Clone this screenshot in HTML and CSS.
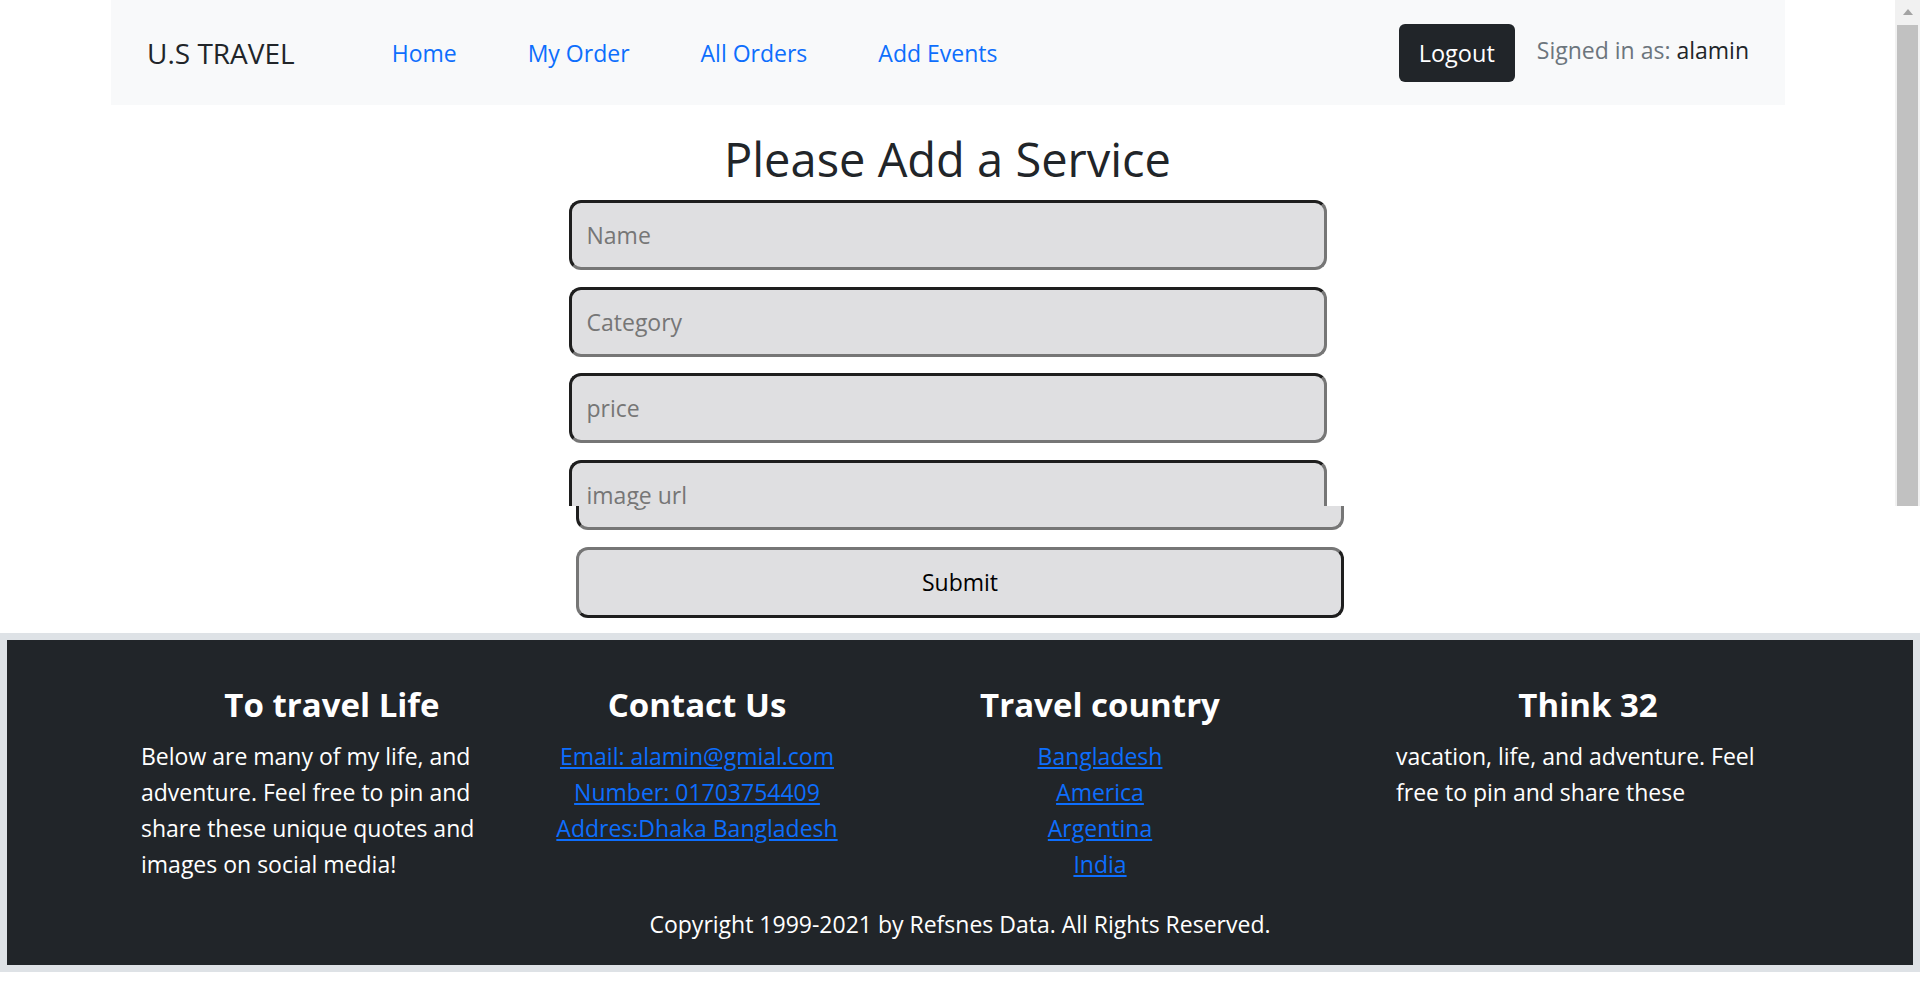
FILE: index.html
```html
<!DOCTYPE html>
<html lang="en">
<head>
<meta charset="utf-8">
<title>U.S Travel - Add Service</title>
<link rel="stylesheet" href="styles.css">
</head>
<body>
<div class="scrollbar" aria-hidden="true">
  <div class="sb-arrow"></div>
  <div class="sb-thumb"></div>
</div>

<div class="upper">
  <nav class="navbar">
    <a class="brand" href="#">U.S TRAVEL</a>
    <ul class="nav-links">
      <li><a href="#">Home</a></li>
      <li><a href="#">My Order</a></li>
      <li><a href="#">All Orders</a></li>
      <li><a href="#">Add Events</a></li>
    </ul>
    <div class="nav-right">
      <button class="logout" type="button">Logout</button>
      <span class="signed">Signed in as: <span class="user">alamin</span></span>
    </div>
  </nav>

  <h1 class="title">Please Add a Service</h1>

  <div class="form-top">
    <input class="field" type="text" placeholder="Name">
    <input class="field" type="text" placeholder="Category">
    <input class="field" type="text" placeholder="price">
    <div class="slice slice-top"><input class="field" type="text" placeholder="image url"></div>
  </div>
</div>

<div class="lower">
  <div class="slice slice-bottom" aria-hidden="true"><input class="field" type="text" placeholder="image url" tabindex="-1"></div>
  <button class="submit" type="submit">Submit</button>

  <footer class="footer">
    <div class="footer-inner">
      <div class="cols">
        <div class="col col1">
          <h3>To travel Life</h3>
          <p>Below are many of my life, and<br>adventure. Feel free to pin and<br>share these unique quotes and<br>images on social media!</p>
        </div>
        <div class="col col2">
          <h3>Contact Us</h3>
          <a href="#">Email: alamin@gmial.com</a>
          <a href="#">Number: 01703754409</a>
          <a href="#">Addres:Dhaka Bangladesh</a>
        </div>
        <div class="col col3">
          <h3>Travel country</h3>
          <a href="#">Bangladesh</a>
          <a href="#">America</a>
          <a href="#">Argentina</a>
          <a href="#">India</a>
        </div>
        <div class="col col4">
          <h3>Think 32</h3>
          <p>vacation, life, and adventure. Feel<br>free to pin and share these</p>
        </div>
      </div>
      <p class="copyright">Copyright 1999-2021 by Refsnes Data. All Rights Reserved.</p>
    </div>
  </footer>
</div>
</body>
</html>
```

FILE: styles.css
```css
* { box-sizing: border-box; }

html, body {
  margin: 0;
  padding: 0;
  background: #fff;
}

body {
  position: relative;
  font-family: "Open Sans", "Noto Sans", sans-serif;
  font-size: 23px;
  line-height: 1.5;
  color: #212529;
  min-height: 985px;
}

/* fake browser scrollbar (top viewport part) */
.scrollbar {
  position: absolute;
  top: 0;
  right: 0;
  width: 25px;
  height: 506px;
  background: #f1f1f1;
}
.sb-arrow {
  position: absolute;
  top: 9px;
  left: 8px;
  width: 0;
  height: 0;
  border-left: 5px solid transparent;
  border-right: 5px solid transparent;
  border-bottom: 6px solid #a3a3a3;
}
.sb-thumb {
  position: absolute;
  top: 25px;
  left: 2px;
  right: 2px;
  bottom: 0;
  background: #c1c1c1;
}

/* upper part: laid out next to the scrollbar */
.upper {
  width: 1895px;
}

.navbar {
  margin: 0 110px 0 111px;
  height: 105px;
  background: #f8f9fa;
  display: flex;
  align-items: center;
  padding: 0 36px;
}

.brand {
  font-size: 28px;
  color: #212529;
  text-decoration: none;
  margin-right: 97px;
  line-height: 1;
}

.nav-links {
  list-style: none;
  margin: 2px 0 0;
  padding: 0;
  display: flex;
  gap: 71px;
}
.nav-links a {
  font-size: 23px;
  color: #0d6efd;
  text-decoration: none;
}

.nav-right {
  margin-left: auto;
  display: flex;
  align-items: center;
}

.logout {
  font-family: inherit;
  font-size: 23.5px;
  color: #fff;
  background: #212529;
  border: 0;
  border-radius: 6px;
  height: 58px;
  padding: 0 20px;
}

.signed {
  margin-left: 22px;
  font-size: 23px;
  color: #6c757d;
  margin-bottom: 4px;
}
.user { color: #212529; }

.title {
  margin: 25px 0 12px;
  text-align: center;
  font-size: 47px;
  font-weight: 500;
  line-height: 58px;
}

.form-top {
  display: flex;
  flex-direction: column;
  align-items: center;
  gap: calc(50px / 3);
}

.field {
  display: block;
  width: 40%;
  height: 70px;
  margin: 0;
  padding: 0 15px;
  font-family: inherit;
  font-size: 23px;
  color: #212529;
  background: #dfdfe1;
  border: 3px solid;
  border-color: #1e1e1e #767676 #767676 #1e1e1e;
  border-radius: 12px;
}
.field::placeholder { color: #767676; }

.slice {
  width: 40%;
  overflow: hidden;
}
.slice .field { width: 100%; }
.slice-top { height: 46px; }
.slice-bottom {
  height: 24px;
  margin: 0 auto;
}
.slice-bottom .field { margin-top: -46px; }

.lower {
  width: 1920px;
}

.submit {
  display: block;
  width: 40%;
  height: 71px;
  margin: 17px auto 0;
  font-family: inherit;
  font-size: 23px;
  color: #000;
  background: #dfdfe1;
  border: 3px solid;
  border-color: #767676 #1e1e1e #1e1e1e #767676;
  border-radius: 12px;
}

.footer {
  margin-top: 15px;
  border: 7px solid #dee2e6;
}
.footer-inner {
  background: #212529;
  color: #fff;
  height: 325px;
  padding: 44px 0 0;
}

.cols {
  display: flex;
  align-items: flex-start;
  padding-left: 134px;
}

.col h3 {
  margin: 0 0 13px;
  font-size: 33px;
  font-weight: 700;
  line-height: 41px;
  text-align: center;
  white-space: nowrap;
}
.col p {
  margin: 0;
  line-height: 36px;
  white-space: nowrap;
}
.col a {
  color: #0d6efd;
  line-height: 36px;
  white-space: nowrap;
}

.col1 { width: 382px; }
.col2,
.col3 {
  width: 340px;
  display: flex;
  flex-direction: column;
  align-items: center;
}
.col2 { margin-left: 4px; }
.col3 { margin-left: 63px; }
.col4 { width: 384px; margin-left: 126px; }

.copyright {
  margin: 24px 0 0;
  text-align: center;
  line-height: 36px;
}
```
